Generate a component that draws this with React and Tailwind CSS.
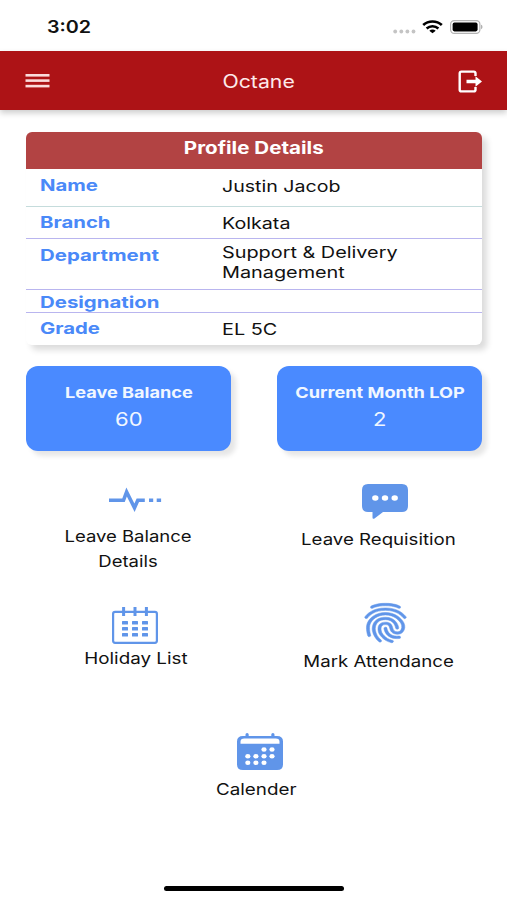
import React from 'react';
import { IoFingerPrint } from 'react-icons/io5';

const StatusBar = () => (
  <div className="flex h-[51px] items-start justify-between pl-[47px] pr-[24px]">
    <span className="mt-[16px] inline-block origin-left scale-x-[1.16] text-[17px] font-semibold leading-[23px]">3:02</span>
    <div className="mt-[20px] flex items-start">
      <svg className="mt-[9px]" width="23" height="5" viewBox="0 0 23 5" fill="#c4c4c4">
        <circle cx="2.2" cy="2.5" r="1.9" />
        <circle cx="8.3" cy="2.5" r="1.9" />
        <circle cx="14.4" cy="2.5" r="1.9" />
        <circle cx="20.5" cy="2.5" r="1.9" />
      </svg>
      <svg className="ml-[6px]" width="21" height="14" viewBox="0 0 21 14" preserveAspectRatio="none">
        <path d="M1.2 5.1C6.4.3 14.6.3 19.8 5.1" fill="none" stroke="#000" strokeWidth="2.7" />
        <path d="M4.6 8.5c3.4-3.1 8.4-3.1 11.8 0" fill="none" stroke="#000" strokeWidth="2.5" />
        <path d="M10.500 13.300 7.300 10.700c1.800-1.500 4.600-1.500 6.400 0z" />
      </svg>
      <svg className="ml-[7px]" width="33" height="14" viewBox="0 0 33 14">
        <rect x="0.6" y="0.6" width="29.3" height="12.8" rx="3.6" fill="#fff" stroke="#b4b4b4" strokeWidth="1.2" />
        <rect x="2.6" y="2.6" width="25" height="8.8" rx="1.8" />
        <path d="M31.200 4.800c1.600.6 1.600 3.800 0 4.400z" fill="#a0a0a0" />
      </svg>
    </div>
  </div>
);

const Header = () => (
  <header className="flex h-[59px] items-center justify-between bg-[#ad1316] pl-[25px] pr-[24px] text-white shadow-[0_3px_6px_rgba(0,0,0,0.2)]">
    <svg width="25" height="15" viewBox="0 0 25 15" fill="#fbdcdc">
      <rect x="0.5" y="1" width="24" height="2.6" />
      <rect x="0.5" y="6.3" width="24" height="2.6" />
      <rect x="0.5" y="11.800" width="24" height="2.6" />
    </svg>
    <h1 className="ml-[9px] mt-[2px] scale-x-[1.18] text-[18px] leading-6 text-[#fdeaea]">Octane</h1>
    <svg className="mt-[1px]" width="25" height="23" viewBox="0 0 25 23" fill="none">
      <path d="M17.500 6V3.200q0-1.600-1.600-1.600H3.300q-1.600 0-1.600 1.600v16.600q0 1.600 1.600 1.600h12.600q1.600 0 1.600-1.600v-2.800" stroke="#fff" strokeWidth="2.4" />
      <path d="M8.500 9.700h9V6.300l6.500 5.200-6.500 5.200v-3.400h-9z" fill="#fff" />
    </svg>
  </header>
);

const ProfileCard = () => (
  <section className="ml-[26px] mr-[25px] mt-[22px] h-[213px] overflow-hidden rounded-[6px] bg-white text-[16px] leading-5 shadow-[5px_5px_6px_rgba(0,0,0,0.14)]">
    <h2 className="h-[37px] bg-[#b24343] pt-[6px] text-center text-[17px] font-bold leading-5 text-white">
      <span className="inline-block scale-x-[1.21]">Profile Details</span>
    </h2>
    <div className="flex h-[38px] border-b border-[#c5dcdc] pl-[14px] pt-[6px]">
      <div className="w-[182px] font-bold text-[#4a89f8]"><span className="inline-block origin-left scale-x-[1.27]">Name</span></div>
      <div className="pt-[1px]"><span className="inline-block origin-left scale-x-[1.225]">Justin Jacob</span></div>
    </div>
    <div className="flex h-[32px] border-b border-[#b9b5ef] pl-[14px] pt-[5px]">
      <div className="w-[182px] font-bold text-[#4a89f8]"><span className="inline-block origin-left scale-x-[1.27]">Branch</span></div>
      <div className="pt-[1px]"><span className="inline-block origin-left scale-x-[1.23]">Kolkata</span></div>
    </div>
    <div className="flex h-[51px] border-b border-[#b9b5ef] pl-[14px] pt-[3px]">
      <div className="w-[182px] pt-[3px] font-bold text-[#4a89f8]"><span className="inline-block origin-left scale-x-[1.275]">Department</span></div>
      <div><span className="inline-block origin-left scale-x-[1.24]">Support &amp; Delivery<br />Management</span></div>
    </div>
    <div className="flex h-[23px] border-b border-[#b9b5ef] pl-[14px] pt-[2px]">
      <div className="w-[182px] font-bold text-[#4a89f8]"><span className="inline-block origin-left scale-x-[1.275]">Designation</span></div>
    </div>
    <div className="flex pl-[14px] pt-[5px]">
      <div className="w-[182px] font-bold text-[#4a89f8]"><span className="inline-block origin-left scale-x-[1.27]">Grade</span></div>
      <div className="pt-[1px]"><span className="inline-block origin-left scale-x-[1.24]">EL 5C</span></div>
    </div>
  </section>
);

const StatCard = ({ title, value }) => (
  <div className="flex h-[85px] w-[205px] flex-col items-center rounded-[12px] bg-[#4a8aff] pt-[17px] text-[#f1f7ff] shadow-[5px_5px_5px_rgba(0,0,0,0.1)]">
    <span className="scale-x-[1.21] whitespace-nowrap text-[15px] font-bold leading-5">{title}</span>
    <span className="mt-[5px] scale-x-[1.16] text-[19px] leading-6">{value}</span>
  </div>
);

const PulseIcon = () => (
  <svg width="53" height="26" viewBox="0 0 53 26" fill="none" stroke="#6095e9" strokeWidth="3.6">
    <path d="M0 13.300h14.500L17.600 5 25.500 20.800 28.800 13.300h7" strokeLinejoin="miter" />
    <path d="M40 13.300h4.200M47.700 13.300h4.400" />
  </svg>
);

const ChatIcon = () => (
  <svg width="46" height="36" viewBox="0 0 46 36">
    <path d="M6 0h34q6 0 6 6v16q0 6-6 6H21l-8.500 6.500q-2 1-2-1V28H6q-6 0-6-6V6q0-6 6-6z" fill="#6095e9" />
    <g fill="#fff">
      <ellipse cx="13.300" cy="14" rx="3.200" ry="2.800" />
      <ellipse cx="23" cy="14" rx="3.200" ry="2.800" />
      <ellipse cx="32.700" cy="14" rx="3.200" ry="2.800" />
    </g>
  </svg>
);

const GridCalendarIcon = () => (
  <svg width="46" height="37" viewBox="0 0 46 37" fill="#6095e9">
    <rect x="1.1" y="4.800" width="43.800" height="31" rx="2" fill="none" stroke="#6095e9" strokeWidth="2.200" />
    {[11.6, 23, 34.4].map((x) => (
      <rect key={x} x={x - 1.5} y="0" width="3" height="9" />
    ))}
    {[14, 20, 26].map((y) =>
      [10, 20, 30].map((x) => <rect key={`${x}-${y}`} x={x} y={y} width="6" height="3.400" rx="0.5" />)
    )}
  </svg>
);

const DotCalendarIcon = () => {
  const dots = [[27, 16.5], [35, 16.5], [10.8, 23.2], [18.9, 23.2], [27, 23.2], [35, 23.2], [10.8, 29.8], [18.9, 29.8], [27, 29.8]];
  return (
    <svg width="46" height="38" viewBox="0 0 46 38">
      <path d="M8.500 3V1.500a1.600 1.500 0 0 1 3.200 0V3h22.600V1.500a1.600 1.500 0 0 1 3.200 0V3H40q6 0 6 5.500v23q0 5.500-6 5.500H6q-6 0-6-5.500V8.500Q0 3 6 3z" fill="#6095e9" />
      <path d="M3.500 10.800V8.800q0-3.200 3.800-3.200h31.400q3.800 0 3.800 3.200v2z" fill="#fff" />
      {dots.map(([x, y]) => (
        <ellipse key={`${x}-${y}`} cx={x} cy={y} rx="2.600" ry="2.200" fill="#fff" />
      ))}
    </svg>
  );
};

const App = () => {
  return (
    <div className="flex h-[900px] w-[507px] flex-col overflow-hidden bg-white font-['Inter',sans-serif] text-[#111]">
      <StatusBar />
      <Header />
      <ProfileCard />
      <div className="ml-[26px] mr-[25px] mt-[21px] flex justify-between">
        <StatCard title="Leave Balance" value="60" />
        <StatCard title="Current Month LOP" value="2" />
      </div>

      <div className="mx-[25px] mt-[33px] flex h-[119px] justify-between text-[16px]">
        <div className="flex w-[207px] flex-col items-center pt-[3px] text-center">
          <div className="ml-[13px]"><PulseIcon /></div>
          <span className="mt-[11px] scale-x-[1.155] leading-[24.5px]">Leave Balance<br />Details</span>
        </div>
        <div className="flex w-[207px] flex-col items-center">
          <div className="ml-[13px]"><ChatIcon /></div>
          <span className="mt-[7px] scale-x-[1.165] leading-6">Leave Requisition</span>
        </div>
      </div>

      <div className="mx-[25px] flex h-[129px] justify-between text-[16px]">
        <div className="flex w-[221px] flex-col items-center pt-[4px]">
          <div className="mr-[2px]"><GridCalendarIcon /></div>
          <span className="mt-[2px] scale-x-[1.175] leading-6">Holiday List</span>
        </div>
        <div className="flex w-[207px] flex-col items-center">
          <IoFingerPrint className="-mt-px ml-[13px] h-[42px] w-[51px] text-[#6095e9] [stroke-width:6]" preserveAspectRatio="none" />
          <span className="mt-[5px] scale-x-[1.165] leading-6">Mark Attendance</span>
        </div>
      </div>

      <div className="flex flex-col items-center pl-[6px] pt-[1px] text-[16px]">
        <div className="ml-[7px]"><DotCalendarIcon /></div>
        <span className="mt-[6px] scale-x-[1.175] leading-6">Calender</span>
      </div>

      <div className="mb-[9px] ml-[164px] mt-auto h-[5px] w-[180px] rounded-full bg-black" />
    </div>
  );
};

export default App;
